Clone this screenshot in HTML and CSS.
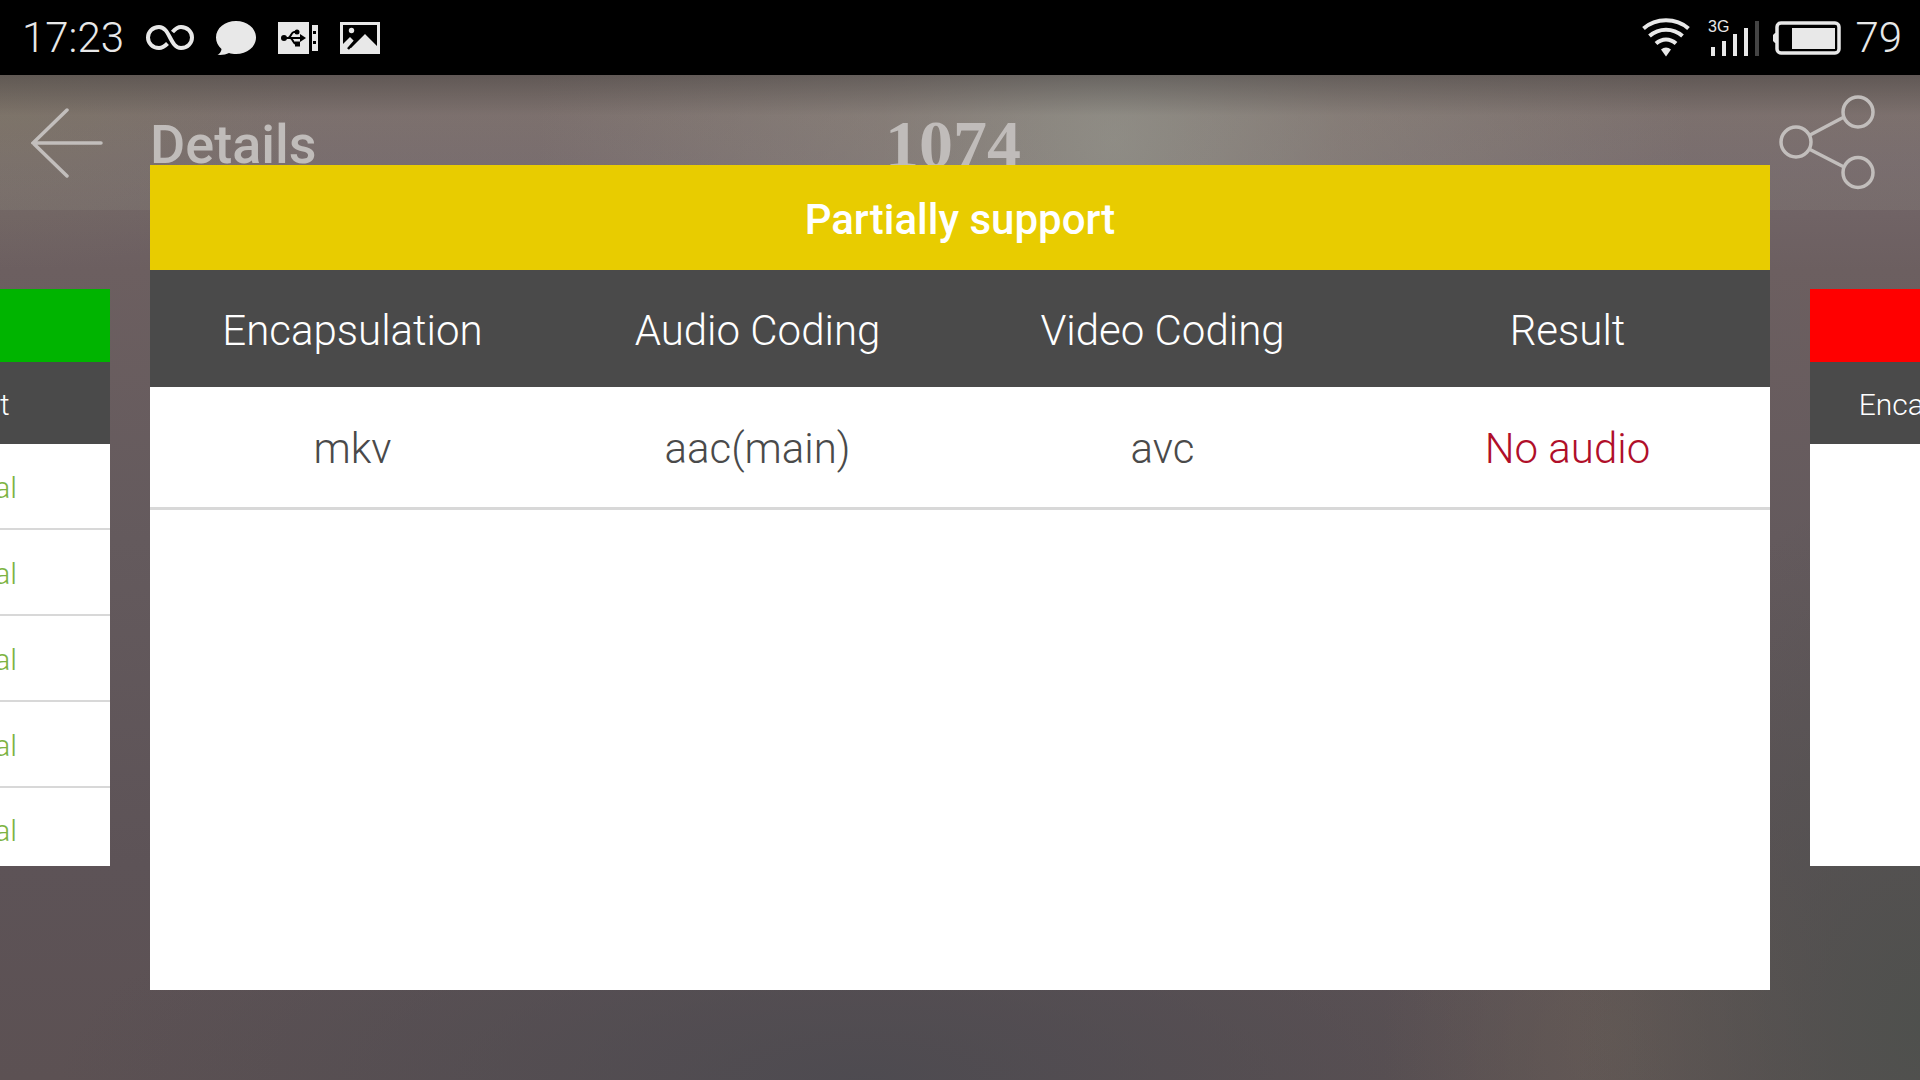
FILE: index.html
```html
<!DOCTYPE html>
<html lang="en">
<head>
<meta charset="utf-8">
<title>Details</title>
<link rel="stylesheet" href="styles.css">
</head>
<body>
<div class="screen">
  <div class="status">
    <div class="status-left">
      <span class="clock">17:23</span>
      <svg width="48" height="34" viewBox="0 0 48 34" fill="none" stroke="#e8e8e8" stroke-width="4"><path d="M21.500 22.500C18.500 25.500 16 27 13 27C6.500 27 2 22 2 16.500C2 11 6.500 6 13 6C24 6 24 27 35 27C41.500 27 46 22 46 16.500C46 11 41.500 6 35 6C32 6 29.500 7.500 26.500 11"/></svg>
      <svg width="40" height="34" viewBox="0 0 40 34" fill="#e8e8e8"><path d="M20 0C31 0 40 7 40 16.500C40 26 31 33 20 33C17.500 33 15 32.600 13 32C10 33.500 6 34.200 1.500 33.800C4 32.500 5.500 30 5.500 28C2 25 0 21 0 16.500C0 7 9 0 20 0Z"/></svg>
      <svg width="40" height="34" viewBox="0 0 40 34"><path d="M0 1h31v32H0ZM34 4h6v26h-6Z" fill="#e8e8e8"/><path d="M35 10h3v3h-3zM35 20h3v3h-3zM22 13l6 4-6 4z"/><circle cx="6" cy="17" r="3"/><circle cx="19" cy="11" r="2.500"/><path d="M17 20.500h5v5h-5z"/><path d="M6 17h18M10 17c3 0 3-6 6-6h3M12 17c3 0 3 6 6 6" fill="none" stroke="#000" stroke-width="2"/></svg>
      <svg width="40" height="34" viewBox="0 0 40 34"><path d="M1.500 2.500h37v29h-37z" fill="none" stroke="#e8e8e8" stroke-width="3"/><path d="M2 32V24l8-8 4 4-5 6 2 1L25 13l13 13v6z" fill="#e8e8e8"/><circle cx="11.500" cy="9.500" r="2.700" fill="#e8e8e8"/><path d="M8 28l7-8" stroke="#000" stroke-width="2.500"/></svg>
    </div>
    <div class="status-right">
      <svg class="wifi" width="48" height="40" viewBox="0 0 48 40" fill="none" stroke="#e8e8e8" stroke-width="4"><path d="M1.500 10.500C14 -.500 34 -.500 46.500 10.500M7.500 18C17 9.500 31 9.500 40.500 18M14 25.500C20 20 28 20 34 25.500"/><path d="M19 31.500C22 28.800 26 28.800 29 31.500L24 38.500Z" fill="#e8e8e8" stroke="none"/></svg>
      <svg width="51" height="40" viewBox="0 0 51 40"><text class="network" x="0" y="14">3G</text><path d="M3 29h4v9H3zM14 23h4v15h-4zM25 16h4v22h-4zM36 10h4v28h-4z" fill="#e8e8e8"/><path d="M47 3h4v35h-4z" fill="#444"/></svg>
      <svg width="68" height="34" viewBox="0 0 68 34"><rect x="4" y="2" width="62" height="30" rx="4" fill="none" stroke="#e8e8e8" stroke-width="3.500"/><path d="M3 12h-1l-2 2v6l2 2h1zM19 7h43v21H19z" fill="#e8e8e8"/></svg>
      <span class="charge">79</span>
    </div>
  </div>

  <header class="bar">
    <button class="icon-button" type="button" aria-label="Back">
      <svg width="72" height="70" viewBox="0 0 72 70" fill="none" stroke="#c2bebc" stroke-width="3.500" stroke-linecap="round"><path d="M36 2L2 35L36 68M2 35H70"/></svg>
    </button>
    <h1 class="heading">Details</h1>
    <span class="count">1074</span>
    <button class="icon-button share" type="button" aria-label="Share">
      <svg width="96" height="96" viewBox="0 0 96 96" fill="none" stroke="#c2bebc" stroke-width="3.500"><circle cx="17" cy="47" r="15"/><circle cx="79" cy="17" r="15"/><circle cx="79" cy="77.500" r="15"/><path d="M31 40L65 22M31 54.500L65 72"/></svg>
    </button>
  </header>

  <main class="carousel">
    <section class="card side">
      <div class="title full"></div>
      <table>
        <thead><tr><th></th><th></th><th></th><th>Result</th></tr></thead>
        <tbody>
          <tr><td></td><td></td><td></td><td class="ok">Normal</td></tr>
          <tr><td></td><td></td><td></td><td class="ok">Normal</td></tr>
          <tr><td></td><td></td><td></td><td class="ok">Normal</td></tr>
          <tr><td></td><td></td><td></td><td class="ok">Normal</td></tr>
          <tr><td></td><td></td><td></td><td class="ok">Normal</td></tr>
        </tbody>
      </table>
    </section>
    <section class="card">
      <h2 class="title partial">Partially support</h2>
      <table>
        <thead><tr><th>Encapsulation</th><th>Audio Coding</th><th>Video Coding</th><th>Result</th></tr></thead>
        <tbody><tr><td>mkv</td><td>aac(main)</td><td>avc</td><td class="bad">No audio</td></tr></tbody>
      </table>
    </section>
    <section class="card side">
      <div class="title none"></div>
      <table>
        <thead><tr><th>Encapsulation</th><th></th><th></th><th></th></tr></thead>
      </table>
    </section>
  </main>
</div>
</body>
</html>
```
FILE: styles.css
```css
* { box-sizing: border-box; }
body {
  margin: 0;
  background: #000;
  font-family: Roboto, "Liberation Sans", sans-serif;
  font-weight: 300;
}
.screen {
  display: flex;
  flex-direction: column;
  min-height: 100vh;
  overflow: hidden;
  background:
    radial-gradient(ellipse 30% 60% at 58% 13%, rgba(146, 146, 138, .85), rgba(142, 136, 128, .5) 40%, transparent),
    radial-gradient(ellipse 16% 14% at 0% 11%, rgba(122, 114, 96, .55), transparent),
    radial-gradient(ellipse 18% 50% at 100% 95%, rgba(78, 80, 77, .95), transparent),
    radial-gradient(ellipse 12% 30% at 84% 96%, rgba(102, 92, 86, .7), transparent),
    radial-gradient(ellipse 42% 24% at 45% 100%, rgba(76, 74, 80, .9), transparent),
    linear-gradient(#7b6e69 7%, #74676a 15%, #6c5f60 25%, #645a5d 50%, #5d5357 80%, #5c5153);
}
.status {
  display: flex;
  justify-content: space-between;
  height: 75px;
  padding: 0 18px 0 22px;
  background: #000;
  color: #e8e8e8;
}
.status-left, .status-right { display: flex; align-items: center; }
.status-left { gap: 22px; }
.status-right { gap: 14px; }
.wifi { margin-right: 4px; }
.clock, .charge { font-size: 42px; line-height: 75px; }
.network { font: 16px "Liberation Sans", sans-serif; fill: #e8e8e8; }

.bar {
  display: grid;
  grid-template-columns: 150px 1fr auto 1fr 164px;
  align-items: center;
  height: 135px;
  background: linear-gradient(rgba(70, 66, 66, .5), rgba(146, 140, 130, .16) 30%, rgba(146, 142, 132, .2));
  color: #c0bcba;
}
.icon-button {
  display: flex;
  padding: 0 0 0 31px;
  border: 0;
  background: none;
}
.share { grid-column: 5; justify-content: flex-end; padding: 0 45px 0 0; }
.heading { margin: 0; padding-top: 5px; font-size: 54px; font-weight: 500; line-height: 64px; }
.count { padding-top: 3px; font: bold 68px/64px "Liberation Serif", serif; }

.carousel {
  position: relative;
  display: flex;
  flex: 1;
  justify-content: center;
  gap: 40px;
  margin-top: -45px;
  padding-bottom: 90px;
}
.card {
  flex: 0 0 84.375%;
  background: #fff;
  color: #4a4a4a;
  font-size: 42px;
  line-height: 52px;
  overflow: hidden;
}
.side {
  flex-basis: 59.0625%;
  margin: 124px 0;
  font-size: 30px;
  line-height: 36px;
}
.side tbody tr:last-child td { border-bottom: 0; height: 77px; padding-top: 8px; }
.title {
  height: 105px;
  margin: 0;
  color: #fff;
  font-size: 42px;
  font-weight: 500;
  line-height: 110px;
  text-align: center;
}
.side .title { height: 73px; }
.full { background: #00b400; }
.partial { background: #e8cc00; }
.none { background: #f00; }

table { width: 100%; table-layout: fixed; border-collapse: separate; border-spacing: 0; }
th, td { padding: 4px 0 0; font-weight: 300; text-align: center; }
th { height: 117px; background: #4a4a4a; color: #fff; }
td { height: 123px; border-bottom: 3px solid #d8d8d8; }
.side th { height: 82px; }
.side td { height: 86px; border-bottom-width: 2px; }
.ok { color: #7cb342; }
.bad { color: #b00f2a; }
```
